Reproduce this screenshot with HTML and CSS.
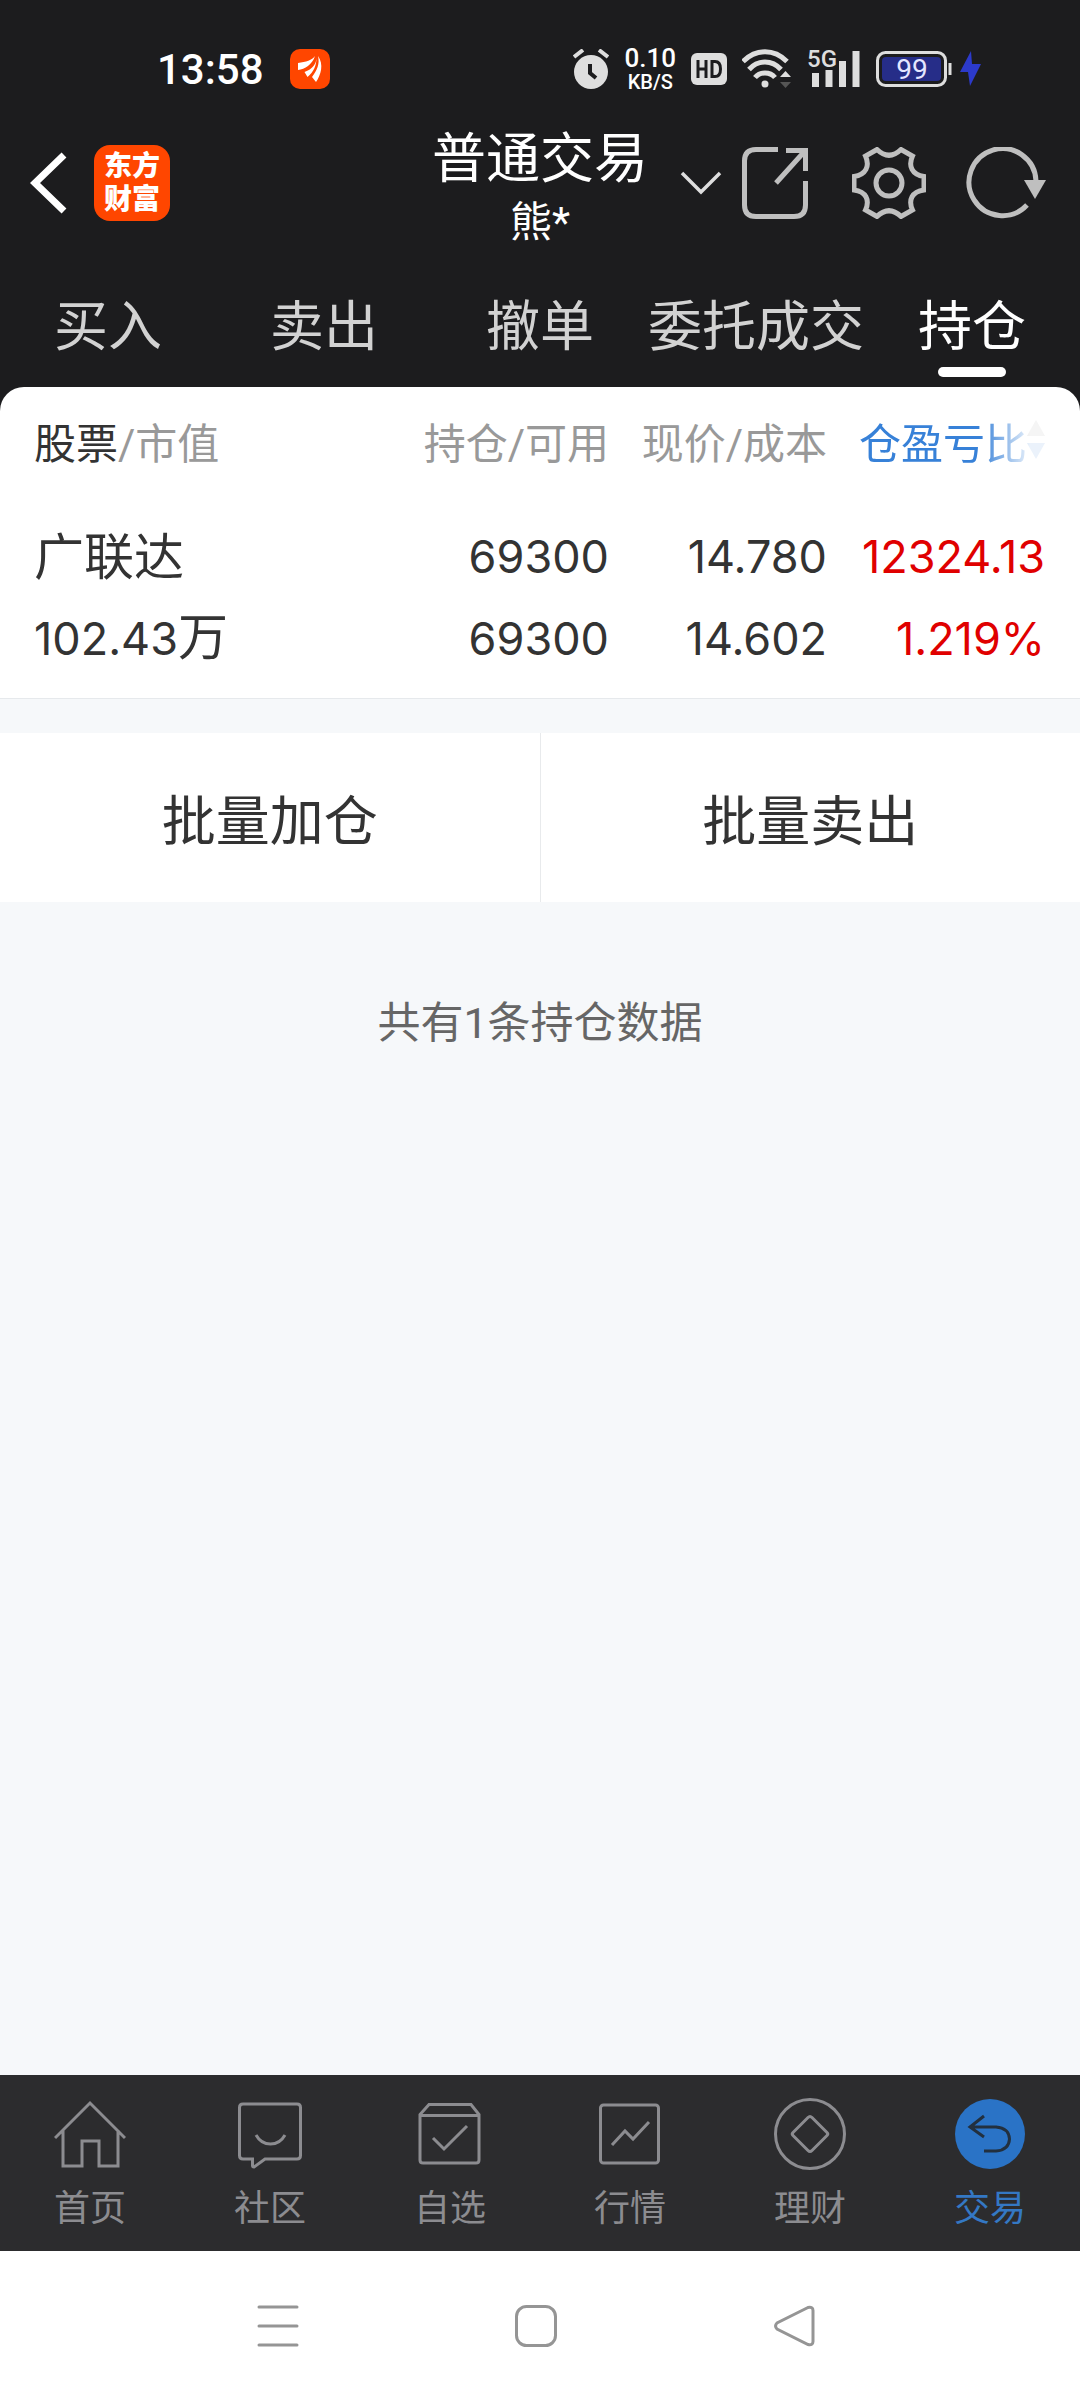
FILE: index.html
```html
<!DOCTYPE html>
<html lang="zh-CN">
<head>
  <meta charset="UTF-8" />
  <meta name="viewport" content="width=device-width, initial-scale=1.0">
  <title>普通交易 - 持仓</title>
  <link rel="stylesheet" href="styles.css">
</head>
<body>
  <div class="top">
    <!-- Status bar -->
    <div class="status">
      <div class="status-left">
        <span class="clock">13:58</span>
        <svg width="40" height="40" viewBox="0 0 40 40">
          <rect width="40" height="40" rx="10" fill="#ff4600"/>
          <g fill="#fff">
            <path d="M25 7c-3 4-9 6-17 7v7c7-1 14-5 17-14z"/>
            <path d="M26.500 8c0 7-4 12-12 15l3 5c6-5 9-11 9-20z"/>
            <path d="M28 7c2 8-1 14-6 21l4 5c5-7 8-18 2-26z"/>
          </g>
        </svg>
      </div>
      <div class="status-right">
        <svg width="36" height="40" viewBox="0 0 36 40">
          <circle cx="18" cy="23" r="17" fill="#dedede"/>
          <path d="M1 8l9-7M35 8l-9-7" stroke="#dedede" stroke-width="4"/>
          <path d="M17 15v9l6 5" fill="none" stroke="#1c1c1e" stroke-width="4"/>
        </svg>
        <div class="speed"><span>0.10</span><span class="unit">KB/S</span></div>
        <svg width="36" height="32" viewBox="0 0 36 32">
          <rect width="36" height="32" rx="6" fill="#dedede"/>
          <path d="M7 7v18M15 7v18M7 16h8" fill="none" stroke="#1c1c1e" stroke-width="3"/>
          <path d="M21 8.500h3c4 0 5.500 3 5.500 7.500s-1.500 7.500-5.500 7.500h-3z" fill="none" stroke="#1c1c1e" stroke-width="3"/>
        </svg>
        <svg width="50" height="40" viewBox="0 0 50 40">
          <g fill="none" stroke="#dedede" stroke-width="5">
            <path d="M1 12.500c13-13 31-13 44 0"/>
            <path d="M7 20.500c9-10 23-10 32 0"/>
            <path d="M13 28.500c5-6 15-6 20 0"/>
          </g>
          <circle cx="23" cy="35" r="3.500" fill="#dedede"/>
          <path d="M38 28l5.500-6 5.500 6z" fill="#dedede"/>
          <path d="M38 33h11l-5.500 6z" fill="#555"/>
        </svg>
        <svg class="signal" width="54" height="56" viewBox="0 -8 54 56">
          <text x="0" y="18">5G</text>
          <path d="M8.500 24v14M22 21v17M35.500 12v26M49 2v36" stroke="#dedede" stroke-width="7"/>
        </svg>
        <svg class="battery" width="106" height="38" viewBox="0 0 106 38">
          <rect x="1.500" y="2.500" width="68" height="33" rx="8" fill="none" stroke="#dedede" stroke-width="3"/>
          <rect x="6" y="7" width="59" height="24" rx="4" fill="#262d88"/>
          <path d="M74 13v12" stroke="#dedede" stroke-width="3"/>
          <text x="36" y="29" text-anchor="middle">99</text>
          <path d="M95 1L84 22h8l2 14 11-22h-9z" fill="#2c3acb"/>
        </svg>
      </div>
    </div>

    <!-- Title bar -->
    <header class="header">
      <div class="header-left">
        <button class="icon-btn" aria-label="返回">
          <svg width="38" height="62" viewBox="0 0 38 62">
            <path d="M34 3L5 31l29 28" fill="none" stroke="#fff" stroke-width="7"/>
          </svg>
        </button>
        <div class="logo"><span>东方</span><span>财富</span></div>
      </div>
      <div class="title">
        <h1>普通交易</h1>
        <span class="user">熊*</span>
      </div>
      <div class="header-right">
        <button class="icon-btn more" aria-label="展开">
          <svg width="42" height="24" viewBox="0 0 42 24">
            <path d="M2 2l19 19L40 2" fill="none" stroke="#dedede" stroke-width="3.500"/>
          </svg>
        </button>
        <button class="icon-btn share" aria-label="分享">
          <svg width="66" height="72" viewBox="0 0 66 72">
            <path d="M36 2.500H14Q2.500 2.500 2.500 14v44q0 11.500 11.500 11.500h38q11.500 0 11.500-11.500V34M44 3.500h19.500V24M34 36L62 5" fill="none" stroke="#bfbfbf" stroke-width="5"/>
          </svg>
        </button>
        <button class="icon-btn gear" aria-label="设置">
          <svg width="74" height="72" viewBox="0 0 74 72">
            <path d="M25 2.500Q37 14 49 2.500L60.500 9C56 19 60 28 72 29.500v13.500C60 44.500 56 53 60.500 63L49 69.500Q37 58 25 69.500L13.500 63C18 53 14 44.500 2 43V29.500C14 28 18 19 13.500 9z" fill="none" stroke="#bfbfbf" stroke-width="5"/>
            <circle cx="37" cy="36" r="13" fill="none" stroke="#bfbfbf" stroke-width="5"/>
          </svg>
        </button>
        <button class="icon-btn" aria-label="刷新">
          <svg width="84" height="72" viewBox="0 0 84 72">
            <path d="M70 34A33.500 33.500 0 1 0 61 58" fill="none" stroke="#bfbfbf" stroke-width="5"/>
            <path d="M58 33h22L69 52z" fill="#bfbfbf"/>
          </svg>
        </button>
      </div>
    </header>

    <!-- Trade tabs -->
    <nav class="tabs">
      <a href="#">买入</a>
      <a href="#">卖出</a>
      <a href="#">撤单</a>
      <a href="#">委托成交</a>
      <a href="#" class="active">持仓</a>
    </nav>

    <div class="panel">
      <table class="holdings">
        <thead>
          <tr>
            <th><span class="dark">股票</span>/市值</th>
            <th>持仓/可用</th>
            <th>现价/成本</th>
            <th>
              <button class="sort">
                <span>仓盈亏比</span>
                <svg width="18" height="40" viewBox="0 0 18 40">
                  <path d="M0 16L9 0l9 16z" fill="#999"/>
                  <path d="M0 23h18L9 39z" fill="#3781d8"/>
                </svg>
              </button>
            </th>
          </tr>
        </thead>
        <tbody>
          <tr>
            <td><div class="name">广联达</div><div>102.43<span class="name">万</span></div></td>
            <td><div>69300</div><div>69300</div></td>
            <td><div>14.780</div><div>14.602</div></td>
            <td class="up"><div>12324.13</div><div>1.219%</div></td>
          </tr>
        </tbody>
      </table>
    </div>
  </div>

  <main class="main">
    <div class="batch">
      <button>批量加仓</button>
      <button>批量卖出</button>
    </div>
    <p class="total">共有1条持仓数据</p>
  </main>

  <!-- App tab bar -->
  <nav class="tabbar">
    <a href="#">
      <svg width="72" height="72" viewBox="0 0 72 72">
        <path d="M1 40L36 5l35 35M9 32v36h19V43h17v25h19V32"/>
      </svg>
      首页
    </a>
    <a href="#">
      <svg width="72" height="72" viewBox="0 0 72 72">
        <path d="M9 6h54q3.500 0 3.500 3.500v48q0 3.500-3.500 3.500H31l-11 8q-1.500 0-1.500-1.500V61H9q-3.500 0-3.500-3.500v-48Q5.500 6 9 6zM22 37q5 9 14.500 9T51 37"/>
      </svg>
      社区
    </a>
    <a href="#">
      <svg width="72" height="72" viewBox="0 0 72 72">
        <path d="M15 6.500h42l8 10V62q0 3-3 3H9q-3 0-3-3V16.500zM6 17.500h59M19 40l11 11 23-23"/>
      </svg>
      自选
    </a>
    <a href="#">
      <svg width="72" height="72" viewBox="0 0 72 72">
        <rect x="6.500" y="7" width="58" height="58" rx="3"/>
        <path d="M18 47l13-14 8 8 16-17"/>
      </svg>
      行情
    </a>
    <a href="#">
      <svg width="72" height="72" viewBox="0 0 72 72">
        <circle cx="36" cy="36" r="34.500"/>
        <path d="M34 19.500q2-2 4 0l15 15q1.500 1.500 0 3l-15 15q-2 2-4 0l-15-15q-1.500-1.500 0-3z"/>
      </svg>
      理财
    </a>
    <a href="#" class="active">
      <svg width="72" height="72" viewBox="0 0 72 72">
        <circle class="disc" cx="36" cy="36" r="35"/>
        <path class="arrow" d="M30 18L16 29l14 10M16 29h26q13 1 13.500 12Q55 52 42 53H30"/>
      </svg>
      交易
    </a>
  </nav>

  <!-- System navigation -->
  <div class="sysnav">
    <button class="icon-btn" aria-label="最近任务">
      <svg width="42" height="42" viewBox="0 0 42 42">
        <path d="M2 2h38M2 21h38M2 40h38"/>
      </svg>
    </button>
    <button class="icon-btn" aria-label="主屏幕">
      <svg width="42" height="42" viewBox="0 0 42 42">
        <rect x="1.500" y="1.500" width="39" height="39" rx="10"/>
      </svg>
    </button>
    <button class="icon-btn" aria-label="后退">
      <svg width="42" height="42" viewBox="0 0 42 42">
        <path d="M35 2.500L4 18q-3 3 0 6l31 15.500q5 1 5-3V5.500q0-4-5-3z"/>
      </svg>
    </button>
  </div>
</body>
</html>
```

FILE: styles.css
```css
* {
  box-sizing: border-box;
}

body {
  margin: 0;
  min-height: 100vh;
  display: flex;
  flex-direction: column;
  background: #f6f8fa;
  color: #333;
  font-family: Roboto, 'Noto Sans CJK SC', sans-serif;
}

button {
  font-family: inherit;
  color: inherit;
  background: none;
  border: none;
  padding: 0;
  cursor: pointer;
}

a {
  color: inherit;
  text-decoration: none;
}

svg {
  display: block;
  flex: none;
}

.top {
  background: #1c1c1e;
}

/* status bar */
.status {
  height: 117px;
  padding: 21px 98px 0 157px;
  display: flex;
  align-items: center;
  justify-content: space-between;
  color: #fff;
}

.status-left,
.status-right {
  display: flex;
  align-items: center;
}

.status-left {
  gap: 26px;
}

.status-right {
  gap: 15px;
}

.clock {
  font-size: 42px;
  font-weight: 500;
}

.speed {
  display: flex;
  flex-direction: column;
  align-items: center;
  font-size: 26px;
  font-weight: 500;
  line-height: 26px;
}

.speed .unit {
  font-size: 20px;
  line-height: 22px;
}

.signal text {
  font-size: 24px;
  font-weight: 500;
  fill: #dedede;
}

.battery text {
  font-size: 28px;
  fill: #e4e6ff;
}

/* title bar */
.header {
  display: grid;
  grid-template-columns: 1fr auto 1fr;
  align-items: center;
  padding: 0 30px;
  color: #fff;
}

.header-left,
.header-right {
  display: flex;
  align-items: center;
}

.header-left {
  gap: 26px;
}

.header-right {
  justify-content: flex-end;
}

.more {
  margin-right: 20px;
}

.share {
  margin-right: 44px;
}

.gear {
  margin-right: 40px;
}

.logo {
  width: 76px;
  height: 76px;
  padding: 5px 0;
  border-radius: 16px;
  background: #ff4600;
  display: flex;
  flex-direction: column;
  align-items: center;
  font-size: 28px;
  font-weight: 900;
  line-height: 33px;
}

.title {
  padding-top: 6px;
  text-align: center;
}

.title h1 {
  margin: 0;
  font-size: 54px;
  font-weight: 400;
  line-height: 74px;
}

.user {
  display: block;
  font-size: 42px;
  line-height: 52px;
}

/* trade tabs */
.tabs {
  display: flex;
  height: 138px;
  padding: 44px 0 10px;
}

.tabs a {
  flex: 1;
  display: flex;
  flex-direction: column;
  align-items: center;
  justify-content: space-between;
  font-size: 54px;
  line-height: 70px;
  color: #d2d2d2;
}

.tabs .active {
  color: #fff;
}

.tabs .active::after {
  content: "";
  width: 68px;
  height: 10px;
  border-radius: 5px;
  background: #fff;
}

/* holdings table */
.panel {
  padding: 0 35px 0 34px;
  background: #fff;
  border-radius: 24px 24px 0 0;
  border-bottom: 1px solid #e6e9ec;
}

.holdings {
  width: 100%;
  table-layout: fixed;
  border-collapse: collapse;
}

.holdings th,
.holdings td {
  width: 218px;
  padding: 0;
  text-align: right;
  white-space: nowrap;
}

.holdings th:first-child,
.holdings td:first-child {
  width: auto;
  text-align: left;
}

.holdings th {
  height: 106px;
  font-size: 42px;
  font-weight: 400;
  color: #999;
}

.holdings .dark {
  color: #333;
}

.holdings td {
  padding: 23px 0 18px;
  font-family: Inter, 'Noto Sans CJK SC', sans-serif;
  font-size: 45px;
  line-height: 82px;
}

.holdings .name {
  font-size: 50px;
}

.holdings span.name {
  line-height: 1;
}

.holdings .up {
  color: #e00000;
}

.sort {
  display: flex;
  align-items: center;
  margin-left: auto;
  font-size: 42px;
  color: #3781d8;
  -webkit-mask-image: linear-gradient(to right, #000 65%, rgba(0, 0, 0, 0.1) 92%);
  mask-image: linear-gradient(to right, #000 65%, rgba(0, 0, 0, 0.1) 92%);
}

/* content */
.main {
  flex: 1;
  padding-top: 34px;
}

.batch {
  display: flex;
  background: #fff;
}

.batch button {
  flex: 1;
  height: 169px;
  font-size: 54px;
}

.batch button + button {
  border-left: 1px solid #e8eaec;
}

.total {
  margin: 88px 0 0;
  font-size: 43px;
  line-height: 66px;
  text-align: center;
  color: #666;
}

/* app tab bar */
.tabbar {
  display: flex;
  height: 176px;
  padding-top: 23px;
  background: #2c2c2e;
}

.tabbar a {
  flex: 1;
  display: flex;
  flex-direction: column;
  align-items: center;
  gap: 14px;
  font-size: 36px;
  line-height: 50px;
  color: #8c8c90;
}

.tabbar svg {
  fill: none;
  stroke: #8c8c90;
  stroke-width: 3;
}

.tabbar .active {
  color: #3478c4;
}

.tabbar .disc {
  fill: #2a73c6;
  stroke: none;
}

.tabbar .arrow {
  stroke: #22303f;
}

/* system navigation */
.sysnav {
  display: flex;
  align-items: center;
  justify-content: center;
  gap: 216px;
  height: 149px;
  padding-right: 9px;
  background: #fff;
}

.sysnav svg {
  fill: none;
  stroke: #959595;
  stroke-width: 3;
  stroke-linecap: round;
}
```
